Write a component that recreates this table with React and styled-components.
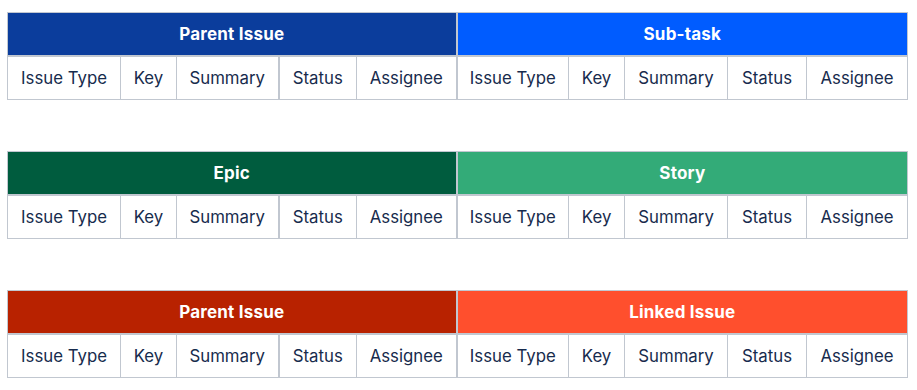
import React from "react";
import styled, { createGlobalStyle } from "styled-components";

const Global = createGlobalStyle`
  html, body { margin: 0; padding: 0; background: #fff; }
  body { font-family: Inter, "Noto Sans", "Liberation Sans", sans-serif; }
`;

const Page = styled.div`
  display: flex;
  flex-direction: column;
  gap: 51px;
  padding: 12px 0 0 7px;
`;

const Table = styled.table`
  border-collapse: collapse;
  table-layout: fixed;
  width: 900px;
`;

const HeadCell = styled.th`
  background: ${(p) => p.$bg};
  color: #fff;
  font-weight: 700;
  font-size: 17px;
  letter-spacing: 0.2px;
  height: 42px;
  padding: 0;
  text-align: center;
  border: 1px solid #c1c7d0;
  border-bottom-width: 2px;
  ${(p) => (p.$split ? "border-left-width: 2px;" : "")}
`;

const Cell = styled.td`
  color: #172b4d;
  font-size: 16.8px;
  height: 42px;
  padding: 0;
  text-align: center;
  white-space: nowrap;
  border: 1px solid #c1c7d0;
  ${(p) => (p.$thick ? "border-left-width: 2px;" : "")}
`;

const widths = [113, 56, 102, 78, 100, 112, 56, 103, 79, 101];
const labels = ["Issue Type", "Key", "Summary", "Status", "Assignee"];

const groups = [
  [
    { title: "Parent Issue", bg: "#0b3d9c" },
    { title: "Sub-task", bg: "#005cff" },
  ],
  [
    { title: "Epic", bg: "#005c3e" },
    { title: "Story", bg: "#33ab78" },
  ],
  [
    { title: "Parent Issue", bg: "#b82200" },
    { title: "Linked Issue", bg: "#ff4f2d" },
  ],
];

function IssueTable({ pair }) {
  return (
    <Table>
      <colgroup>
        {widths.map((w, i) => (
          <col key={i} style={{ width: w }} />
        ))}
      </colgroup>
      <thead>
        <tr>
          {pair.map((g, i) => (
            <HeadCell key={i} colSpan={5} $bg={g.bg} $split={i === 1}>
              {g.title}
            </HeadCell>
          ))}
        </tr>
      </thead>
      <tbody>
        <tr>
          {[...labels, ...labels].map((l, i) => (
            <Cell key={i} $thick={i === 3 || i === 5}>
              {l}
            </Cell>
          ))}
        </tr>
      </tbody>
    </Table>
  );
}

export default function App() {
  return (
    <>
      <Global />
      <Page>
        {groups.map((pair, i) => (
          <IssueTable key={i} pair={pair} />
        ))}
      </Page>
    </>
  );
}
